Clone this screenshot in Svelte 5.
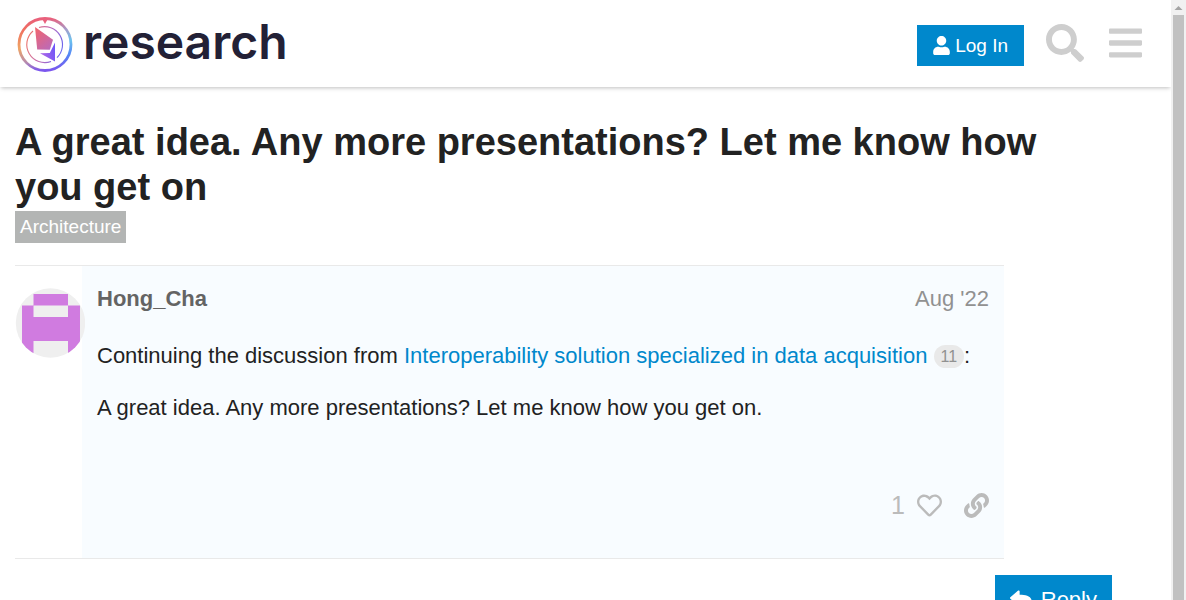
<script>
  const paths = {
    user: 'M224 256c70.7 0 128-57.3 128-128S294.7 0 224 0 96 57.3 96 128s57.3 128 128 128zm89.6 32h-16.7c-22.2 10.2-46.9 16-72.9 16s-50.6-5.8-72.9-16h-16.7C60.2 288 0 348.2 0 422.4V464c0 26.5 21.5 48 48 48h352c26.5 0 48-21.5 48-48v-41.6c0-74.2-60.2-134.4-134.4-134.4z',
    search: 'M505 442.7L405.3 343c-4.5-4.5-10.6-7-17-7H372c27.6-35.3 44-79.7 44-128C416 93.1 322.9 0 208 0S0 93.1 0 208s93.1 208 208 208c48.3 0 92.7-16.4 128-44v16.3c0 6.4 2.5 12.5 7 17l99.7 99.7c9.4 9.4 24.6 9.4 33.9 0l28.3-28.3c9.4-9.4 9.4-24.6.1-34zM208 336c-70.7 0-128-57.2-128-128 0-70.7 57.2-128 128-128 70.7 0 128 57.2 128 128 0 70.7-57.2 128-128 128z',
    bars: 'M16 132h416c8.8 0 16-7.2 16-16V76c0-8.8-7.2-16-16-16H16C7.2 60 0 67.2 0 76v40c0 8.8 7.2 16 16 16zm0 160h416c8.8 0 16-7.2 16-16v-40c0-8.8-7.2-16-16-16H16c-8.8 0-16 7.2-16 16v40c0 8.8 7.2 16 16 16zm0 160h416c8.8 0 16-7.2 16-16v-40c0-8.8-7.2-16-16-16H16c-8.8 0-16 7.2-16 16v40c0 8.8 7.2 16 16 16z',
    heart: 'M458.4 64.3C400.6 15.7 311.3 23 256 79.3 200.7 23 111.4 15.6 53.6 64.3-21.6 127.6-10.6 230.8 43 285.5l175.4 178.7c10 10.2 23.4 15.9 37.6 15.9 14.3 0 27.6-5.6 37.6-15.8L469 285.6c53.5-54.7 64.7-157.9-10.6-221.3zm-23.6 187.5L259.4 430.5c-2.4 2.4-4.4 2.4-6.8 0L77.2 251.8c-36.5-37.2-43.9-107.6 7.3-150.7 38.9-32.7 98.9-27.8 136.5 10.5l35 35.7 35-35.7c37.8-38.5 97.8-43.2 136.5-10.6 51.1 43.1 43.5 113.9 7.3 150.8z',
    link: 'M326.612 185.391c59.747 59.809 58.927 155.698.36 214.59-.11.12-.24.25-.36.37l-67.2 67.2c-59.27 59.27-155.699 59.262-214.96 0-59.27-59.26-59.27-155.7 0-214.96l37.106-37.106c9.84-9.84 26.786-3.3 27.294 10.606.648 17.722 3.826 35.527 9.69 52.721 1.986 5.822.567 12.262-3.783 16.612l-13.087 13.087c-28.026 28.026-28.905 73.66-1.155 101.96 28.024 28.579 74.086 28.749 102.325.51l67.2-67.19c28.191-28.191 28.073-73.757 0-101.83-3.701-3.694-7.429-6.564-10.341-8.569a16.037 16.037 0 0 1-6.947-12.606c-.396-10.567 3.348-21.456 11.698-29.806l21.054-21.055c5.521-5.521 14.182-6.199 20.584-1.731a152.482 152.482 0 0 1 20.522 17.197zM467.547 44.449c-59.261-59.262-155.69-59.27-214.96 0l-67.2 67.2c-.12.12-.25.25-.36.37-58.566 58.892-59.387 154.781.36 214.59a152.454 152.454 0 0 0 20.521 17.196c6.402 4.468 15.064 3.789 20.584-1.731l21.054-21.055c8.35-8.35 12.094-19.239 11.698-29.806a16.037 16.037 0 0 0-6.947-12.606c-2.912-2.005-6.64-4.875-10.341-8.569-28.073-28.073-28.191-73.639 0-101.83l67.2-67.19c28.239-28.239 74.3-28.069 102.325.51 27.75 28.3 26.872 73.934-1.155 101.96l-13.087 13.087c-4.35 4.35-5.769 10.79-3.783 16.612 5.864 17.194 9.042 34.999 9.69 52.721.509 13.906 17.454 20.446 27.294 10.606l37.106-37.106c59.271-59.259 59.271-155.699.001-214.959z',
    reply: 'M8.309 189.836L184.313 37.851C199.719 24.546 224 35.347 224 56.015v80.053c160.629 1.839 288 34.032 288 186.258 0 61.441-39.581 122.309-83.333 154.132-13.653 9.931-33.111-2.533-28.077-18.631 45.344-145.012-21.507-183.51-176.59-185.742V360c0 20.7-24.3 31.453-39.687 18.164l-176.004-152c-11.071-9.562-11.086-26.753 0-36.328z'
  };
</script>

{#snippet icon(name, size, width = 512)}
  <svg height={size} width={Math.round(size * width / 512)} viewBox="0 0 {width} 512" fill="currentColor" aria-hidden="true"><path d={paths[name]} /></svg>
{/snippet}

<div class="window">
  <div class="page">
    <header>
      <a class="brand" href="#home">
        <svg width="56" height="56" viewBox="0 0 56 56" fill="none" aria-hidden="true">
          <defs>
            <linearGradient id="ring-left" x1="0" y1="0" x2="0" y2="1">
              <stop offset="0" stop-color="#e9607c" />
              <stop offset=".22" stop-color="#f0705f" />
              <stop offset=".58" stop-color="#efa565" />
              <stop offset=".85" stop-color="#b58bb0" />
              <stop offset="1" stop-color="#7b56ee" />
            </linearGradient>
            <linearGradient id="ring-right" x1="0" y1="0" x2="0" y2="1">
              <stop offset="0" stop-color="#e9607c" />
              <stop offset=".2" stop-color="#a79bc8" />
              <stop offset=".42" stop-color="#6dc3ee" />
              <stop offset=".7" stop-color="#5485f5" />
              <stop offset="1" stop-color="#7b56ee" />
            </linearGradient>
            <linearGradient id="inner" x1="10" y1="20" x2="46" y2="32" gradientUnits="userSpaceOnUse">
              <stop stop-color="#ed7468" />
              <stop offset=".5" stop-color="#c36eb6" />
              <stop offset="1" stop-color="#6865ef" />
            </linearGradient>
            <linearGradient id="gem" x1="18" y1="14" x2="36" y2="34" gradientUnits="userSpaceOnUse">
              <stop stop-color="#f06570" />
              <stop offset="1" stop-color="#b56bc1" />
            </linearGradient>
            <linearGradient id="tail" x1="26" y1="38" x2="40" y2="34" gradientUnits="userSpaceOnUse">
              <stop stop-color="#a665e8" />
              <stop offset="1" stop-color="#6a55fa" />
            </linearGradient>
          </defs>
          <path d="M28 2.500a26 26 0 0 0 0 52" stroke="url(#ring-left)" stroke-width="2.8" />
          <path d="M28 2.500a26 26 0 0 1 0 52" stroke="url(#ring-right)" stroke-width="2.8" />
          <path d="M25.500 3.500h5L28 8z" fill="#e9607c" />
          <path d="M22 11.500A18 18 0 0 1 40 41.600M34 45.500A18 18 0 0 1 16 15" stroke="url(#inner)" stroke-width="1.1" />
          <path d="M18 11L36 23.800l-3.200 10-12.600-.3z" fill="url(#gem)" />
          <path d="M38 26.500v19L23 37.300l9.800-.4z" fill="url(#tail)" />
        </svg>
        <span>research</span>
      </a>
      <nav>
        <button class="primary login">{@render icon('user', 19, 448)}Log In</button>
        <button class="tool" aria-label="Search">{@render icon('search', 38)}</button>
        <button class="tool" aria-label="Menu">{@render icon('bars', 38, 448)}</button>
      </nav>
    </header>

    <main>
      <h1>A great idea. Any more presentations? Let me know how you get on</h1>
      <a class="category" href="#architecture">Architecture</a>

      <article>
        <div class="avatar">
          <svg width="70" height="70" viewBox="0 0 70 70" role="img" aria-label="Hong_Cha">
            <defs><clipPath id="round"><circle cx="35.500" cy="35" r="34.700" /></clipPath></defs>
            <g clip-path="url(#round)">
              <path d="M0 0h70v70H0z" fill="#efefef" />
              <path d="M18.500 6H53v11.500h12V70H53V53H18.500v17H7V17.500h11.500z" fill="#d07be0" />
              <path d="M18.500 17.500H53V29H18.500z" fill="#efefef" />
            </g>
          </svg>
        </div>
        <div class="post">
          <div class="meta"><strong>Hong_Cha</strong><a href="#date">Aug '22</a></div>
          <div class="text">
            <p>Continuing the discussion from <a href="#topic">Interoperability solution specialized in data acquisition</a> <span class="clicks">11</span>:</p>
            <p>A great idea. Any more presentations? Let me know how you get on.</p>
          </div>
          <div class="actions">
            <button class="like" aria-label="1 like"><span>1</span>{@render icon('heart', 25)}</button>
            <button aria-label="Share link">{@render icon('link', 25)}</button>
          </div>
        </div>
      </article>

      <footer><button class="primary reply">{@render icon('reply', 22)}Reply</button></footer>
    </main>
  </div>
  <div class="scrollbar" aria-hidden="true">
    <svg width="15" height="15" viewBox="0 0 15 15"><path d="M3.500 10L7.500 6l4 4z" fill="#a3a3a3" /></svg>
    <div class="thumb"></div>
  </div>
</div>

<style>
  :global(body) { margin: 0; background: #fff; }
  .window {
    display: flex;
    height: 100vh;
    overflow: hidden;
    color: #222;
    font: 22px/30px "Liberation Sans", Arial, sans-serif;
  }
  .page { flex: 1; min-width: 0; overflow: hidden; }
  svg { display: block; flex: none; }
  a { color: #0088cc; text-decoration: none; }
  button {
    display: flex;
    align-items: center;
    border: 0;
    padding: 0;
    background: none;
    color: inherit;
    font: inherit;
    cursor: pointer;
  }
  header {
    display: flex;
    align-items: center;
    justify-content: space-between;
    height: 87px;
    padding: 0 29px 0 17px;
    box-shadow: 0 2px 4px -1px rgba(0, 0, 0, 0.25);
  }
  .brand {
    display: flex;
    align-items: center;
    gap: 10px;
    color: #232136;
    font: 600 48px/52px Inter, sans-serif;
  }
  .brand span { padding-bottom: 4px; }
  nav { display: flex; align-items: center; gap: 22px; }
  .primary { background: #0088cc; color: #fff; }
  .login { gap: 5px; height: 41px; margin-top: 4px; padding: 0 16px; font-size: 19px; }
  .tool { padding-bottom: 2px; color: #cecece; }
  .tool + .tool { margin-left: 3px; }
  main { max-width: 1097px; padding: 33px 15px 0; }
  h1 { margin: 0 0 1px; font-size: 38px; line-height: 45px; }
  .category {
    display: inline-block;
    padding: 0 5px;
    background: #b3b5b4;
    color: #fff;
    font-size: 19px;
    line-height: 32px;
  }
  article {
    display: flex;
    max-width: 989px;
    margin-top: 22px;
    border: solid #e9e9e9;
    border-width: 1px 0;
  }
  .avatar { position: relative; width: 67px; padding-top: 22px; }
  .post { flex: 1; min-width: 0; padding: 18px 15px 38px; background: #f8fcff; }
  .meta { display: flex; justify-content: space-between; color: #646464; }
  .meta a { color: #919191; }
  .text { min-height: 171px; padding-top: 5px; }
  p { margin: 22px 0; }
  .clicks {
    padding: 3px 7px;
    border-radius: 12px;
    background: #e9e9e9;
    color: #919191;
    font-size: 16px;
    line-height: 18px;
    vertical-align: 1px;
  }
  .actions { display: flex; justify-content: flex-end; gap: 22px; color: #bbb; font-size: 25px; }
  .like { gap: 12px; }
  footer { display: flex; justify-content: flex-end; padding-top: 16px; }
  .reply { gap: 9px; height: 50px; padding: 0 15px; }
  .scrollbar { display: flex; flex-direction: column; width: 15px; background: #f1f1f1; }
  .thumb { flex: 1; margin: 0 2px; background: #c1c1c1; }
</style>
